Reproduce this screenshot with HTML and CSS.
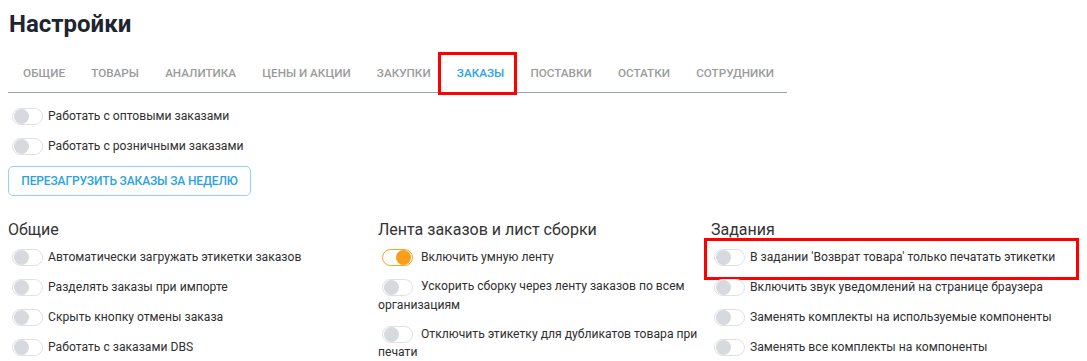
FILE: index.html
```html
<!DOCTYPE html>
<html lang="ru">
<head>
<meta charset="utf-8">
<link rel="stylesheet" href="styles.css">
</head>
<body>
<div class="page">
  <h1 class="title">Настройки</h1>
  <nav class="tabs">
    <span class="tab">Общие</span>
    <span class="tab">Товары</span>
    <span class="tab">Аналитика</span>
    <span class="tab">Цены и акции</span>
    <span class="tab">Закупки</span>
    <span class="tab tab-active">Заказы</span>
    <span class="tab">Поставки</span>
    <span class="tab">Остатки</span>
    <span class="tab">Сотрудники</span>
  </nav>

  <div class="top-list">
    <div class="row"><span class="toggle"></span><span class="label">Работать с оптовыми заказами</span></div>
    <div class="row"><span class="toggle"></span><span class="label">Работать с розничными заказами</span></div>
  </div>
  <button class="btn">Перезагрузить заказы за неделю</button>

  <div class="columns">
    <section class="col">
      <h2 class="col-title">Общие</h2>
      <div class="row"><span class="toggle"></span><span class="label">Автоматически загружать этикетки заказов</span></div>
      <div class="row"><span class="toggle"></span><span class="label">Разделять заказы при импорте</span></div>
      <div class="row"><span class="toggle"></span><span class="label">Скрыть кнопку отмены заказа</span></div>
      <div class="row"><span class="toggle"></span><span class="label">Работать с заказами DBS</span></div>
    </section>
    <section class="col col-mid">
      <h2 class="col-title">Лента заказов и лист сборки</h2>
      <div class="wrap-row"><span class="toggle toggle-on"></span> Включить умную ленту</div>
      <div class="wrap-row"><span class="toggle"></span> Ускорить сборку через ленту заказов по всем организациям</div>
      <div class="wrap-row"><span class="toggle"></span> Отключить этикетку для дубликатов товара при печати</div>
    </section>
    <section class="col col-right">
      <h2 class="col-title">Задания</h2>
      <div class="row row-marked"><span class="toggle"></span><span class="label">В задании 'Возврат товара' только печатать этикетки</span></div>
      <div class="row"><span class="toggle"></span><span class="label">Включить звук уведомлений на странице браузера</span></div>
      <div class="row"><span class="toggle"></span><span class="label">Заменять комплекты на используемые компоненты</span></div>
      <div class="row"><span class="toggle"></span><span class="label">Заменять все комплекты на компоненты</span></div>
    </section>
  </div>
</div>
</body>
</html>
```

FILE: styles.css
```css
* { box-sizing: border-box; }
html, body { margin: 0; padding: 0; background: #fff; }
body {
  font-family: Roboto, "Liberation Sans", Arial, sans-serif;
  color: #2f2f2f;
  font-size: 12.15px;
}
.page { padding: 0 8px; }

.title {
  margin: 6px 0 0 1px;
  font-size: 24px;
  line-height: 36px;
  font-weight: 700;
  color: #1d2530;
}

.tabs {
  display: inline-flex;
  margin-top: 11px;
  padding-left: 2px;
  border-bottom: 1px solid #9aa2a9;
}
.tab {
  padding: 13px 13.1px 12px;
  font-size: 11.7px;
  line-height: 14px;
  font-weight: 500;
  text-transform: uppercase;
  color: #9b9b9b;
}
.tab-active {
  position: relative;
  color: #2ba3e3;
}
.tab-active::after {
  content: "";
  position: absolute;
  left: -6px;
  right: 0;
  top: -1px;
  bottom: -3px;
  border: 3px solid #f00;
}

.top-list { margin-top: 8px; }

.row {
  display: flex;
  align-items: center;
  height: 30px;
}
.label { line-height: 18px; }

.toggle {
  display: inline-block;
  position: relative;
  width: 31px;
  height: 17px;
  margin: 0 5px 0 4px;
  border: 1px solid #dde1e5;
  border-radius: 9px;
  background: #fff;
  vertical-align: middle;
  flex: none;
}
.toggle::before {
  content: "";
  position: absolute;
  left: 1px;
  top: 0;
  width: 15px;
  height: 15px;
  border-radius: 50%;
  background: #d6dade;
}
.toggle-on { border-color: #f6a31f; }
.toggle-on::before { left: auto; right: 1px; background: #f89e1b; }

.btn {
  display: block;
  margin-top: 5px;
  width: 243px;
  height: 30px;
  padding: 0;
  border: 1px solid #93d2f2;
  border-radius: 5px;
  background: #fff;
  font-family: inherit;
  font-size: 12px;
  font-weight: 500;
  letter-spacing: -0.15px;
  text-transform: uppercase;
  color: #2ba3e3;
}

.columns {
  display: grid;
  grid-template-columns: 370px 332px 1fr;
  margin-top: 24px;
}
.col-title {
  margin: 0 0 2px;
  font-size: 16px;
  line-height: 20px;
  font-weight: 400;
  color: #333;
}
.col-right .col-title { margin-left: 1px; }

.wrap-row {
  padding: 6px 0 5px;
  line-height: 18px;
}

.row-marked { position: relative; }
.row-marked::after {
  content: "";
  position: absolute;
  left: -6px;
  top: -4px;
  width: 369px;
  height: 36px;
  border: 3px solid #f00;
}
```
